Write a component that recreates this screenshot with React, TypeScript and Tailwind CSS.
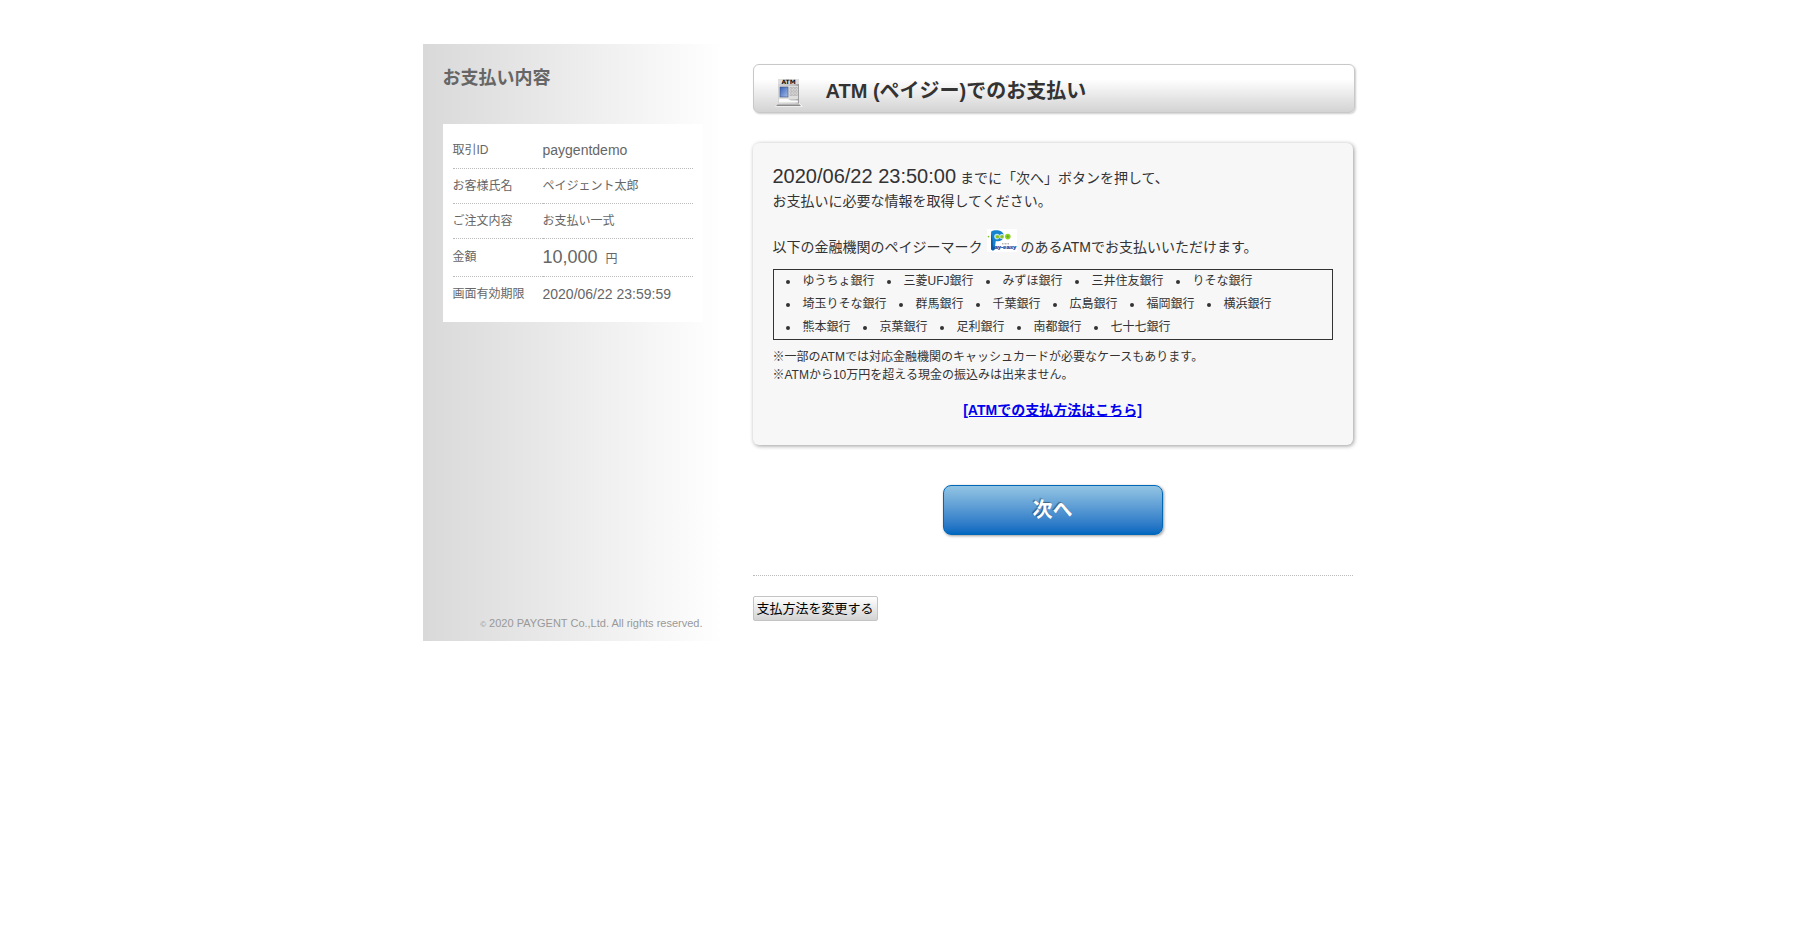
const banks = [
  "ゆうちょ銀行",
  "三菱UFJ銀行",
  "みずほ銀行",
  "三井住友銀行",
  "りそな銀行",
  "埼玉りそな銀行",
  "群馬銀行",
  "千葉銀行",
  "広島銀行",
  "福岡銀行",
  "横浜銀行",
  "熊本銀行",
  "京葉銀行",
  "足利銀行",
  "南都銀行",
  "七十七銀行",
];

const orderRows = [
  { label: "取引ID", value: "paygentdemo" },
  { label: "お客様氏名", value: "ペイジェント太郎" },
  { label: "ご注文内容", value: "お支払い一式" },
  { label: "金額", value: "10,000", unit: "円" },
  { label: "画面有効期限", value: "2020/06/22 23:59:59" },
];

function AtmIcon() {
  return (
    <svg className="mt-2" width="28" height="30" viewBox="0 0 28 30" aria-hidden="true">
      <defs>
        <linearGradient id="atm-body" x1="0" y1="0" x2="1" y2="0">
          <stop offset="0" stopColor="#d4d4d4" />
          <stop offset="0.8" stopColor="#c2c2c2" />
          <stop offset="1" stopColor="#9a9a9a" />
        </linearGradient>
        <linearGradient id="atm-screen" x1="0" y1="0" x2="1" y2="1">
          <stop offset="0" stopColor="#3561b8" />
          <stop offset="1" stopColor="#a3bbe8" />
        </linearGradient>
        <linearGradient id="atm-base" x1="0" y1="0" x2="0" y2="1">
          <stop offset="0" stopColor="#dcdcdc" />
          <stop offset="1" stopColor="#777" />
        </linearGradient>
      </defs>
      <path d="M0 28.5 L4 25 H24 L28 28.5 Z" fill="#fff" />
      <rect x="3" y="1" width="21" height="25" fill="url(#atm-body)" />
      <rect x="3" y="1" width="21" height="5" fill="#dedede" />
      <text x="13.5" y="5.5" fontSize="6" fontWeight="700" textAnchor="middle" fill="#111" fontFamily="DejaVu Sans">
        ATM
      </text>
      <rect x="4" y="8" width="19" height="13" fill="#dedede" />
      <rect x="5" y="9" width="8" height="10" fill="url(#atm-screen)" stroke="#3d4f7a" strokeWidth="0.6" />
      <g fill="#fff" stroke="#8d8d8d" strokeWidth="0.5">
        <path d="M15 9.5h1.6v1.6h-1.6zM17.8 9.5h1.6v1.6h-1.6zM20.6 9.5h1.6v1.6h-1.6z" />
        <path d="M15 12.7h1.6v1.6h-1.6zM17.8 12.7h1.6v1.6h-1.6zM20.6 12.7h1.6v1.6h-1.6z" />
        <path d="M15 15.9h1.6v1.6h-1.6zM17.8 15.9h1.6v1.6h-1.6zM20.6 15.9h1.6v1.6h-1.6z" />
      </g>
      <path d="M4 21 H13 L16 22.5 H23 V24.5 H4 Z" fill="#fafafa" />
      <path d="M3 25.5 H24 L26 28 H1 Z" fill="url(#atm-base)" />
    </svg>
  );
}

function PayEasyMark() {
  return (
    <svg className="mx-1 inline-block align-baseline" width="30" height="23" viewBox="0 0 30 23" role="img" aria-label="Pay-easy">
      <rect width="30" height="23" fill="#fff" />
      <path
        d="M4.2 2.6 C6 1 9.5 0.9 12 1.5 C15.8 2.4 17.2 5 16.5 8 C15.7 11.6 12.4 12.8 8.8 12 L7.6 20.6 C6.4 22.2 3.9 21.2 4 19.2 Z"
        fill="#1683cf"
      />
      <path d="M4.2 2.6 L4 19.2 C3.9 21.2 6.4 22.2 7.6 20.6 L8 18 C6 18.4 5.6 16 5.8 13 Z" fill="#0a5aa8" />
      <circle cx="10" cy="7.6" r="2.8" fill="#bfe3f7" />
      <circle cx="14.9" cy="7.6" r="2.5" fill="#d6eef9" />
      <circle cx="10.4" cy="7.8" r="1.8" fill="#8fc31f" />
      <circle cx="15" cy="7.8" r="1.8" fill="#8fc31f" />
      <circle cx="20.8" cy="7.6" r="2.8" fill="#8fd31f" />
      <path d="M20.8 6 V9.2 M19.2 7.6 H22.4" stroke="#5cae1c" strokeWidth="0.8" />
      <circle cx="1.5" cy="7.6" r="0.9" fill="#7cc52a" />
      <path d="M15 14.8 H22" stroke="#777" strokeWidth="0.8" strokeDasharray="1 0.5" />
      <text x="7.4" y="20.4" fontSize="6" fontWeight="700" fill="#173f9b" stroke="#173f9b" strokeWidth="0.2" fontFamily="Liberation Sans">
        ay-easy
      </text>
    </svg>
  );
}

function Sidebar() {
  return (
    <aside className="flex min-h-[597px] w-[300px] shrink-0 flex-col bg-linear-to-r from-[#d9d9d9] to-white pl-5 text-[#666]">
      <h2 className="mt-[21px] text-lg leading-[26px] font-bold">お支払い内容</h2>
      <div className="mt-[33px] w-[260px] bg-white px-[10px] pt-[9px] pb-[11px]">
        <table className="w-full border-collapse text-left text-xs">
          <tbody>
            {orderRows.map((row) => (
              <tr
                key={row.label}
                className={`${row.unit ? "h-[38px]" : "h-[35px]"} border-b border-dotted border-[#bbb] last:border-b-0`}
              >
                <th scope="row" className="w-[90px] p-0 font-normal whitespace-nowrap">
                  {row.label}
                </th>
                <td className="p-0">
                  {row.unit ? (
                    <>
                      <span className="mr-2 text-lg leading-6">{row.value}</span>
                      {row.unit}
                    </>
                  ) : /^[\x20-\x7e]+$/.test(row.value) ? (
                    <span className="text-sm">{row.value}</span>
                  ) : (
                    row.value
                  )}
                </td>
              </tr>
            ))}
          </tbody>
        </table>
      </div>
      <p className="mt-auto mr-5 mb-2 text-right text-[11px] leading-4 text-[#999]">
        <small className="text-[8px]">©</small> 2020 PAYGENT Co.,Ltd. All rights reserved.
      </p>
    </aside>
  );
}

export default function App() {
  return (
    <div
      lang="ja"
      className="mx-auto flex max-w-[960px] items-start gap-[30px] pt-11 font-['Liberation_Sans','Noto_Sans_CJK_JP',sans-serif] text-sm text-[#333]"
    >
      <Sidebar />
      <main className="mr-[30px] min-w-0 flex-1 pt-5">
        <h1 className="-mr-0.5 flex h-[49px] items-center rounded-md border border-[#c8c8c8] bg-linear-to-b from-white from-30% to-[#d3d3d3] pl-[21px] text-xl font-bold shadow-[1px_1px_2px_rgba(0,0,0,0.2)]">
          <AtmIcon />
          <span className="ml-[23px] pt-1">ATM (ペイジー)でのお支払い</span>
        </h1>

        <section className="mt-[30px] rounded-md bg-[#f7f7f7] px-5 pt-[22px] pb-[23px] shadow-[1px_1px_4px_rgba(0,0,0,0.4)]">
          <p className="leading-[23px]">
            <span className="text-xl leading-[23px]">2020/06/22 23:50:00</span> までに「次へ」ボタンを押して、
            <br />
            お支払いに必要な情報を取得してください。
          </p>
          <p className="mt-4 leading-6">
            以下の金融機関のペイジーマーク
            <PayEasyMark />
            のあるATMでお支払いいただけます。
          </p>
          <ul className="mt-[10px] flex flex-wrap border border-[#333] text-xs leading-[23px]">
            {banks.map((bank) => (
              <li key={bank} className="flex items-center">
                <span className="mr-[13px] ml-3 size-1 rounded-full bg-[#333]" />
                {bank}
              </li>
            ))}
          </ul>
          <p className="mt-2 text-xs leading-[18px]">
            ※一部のATMでは対応金融機関のキャッシュカードが必要なケースもあります。
            <br />
            ※ATMから10万円を超える現金の振込みは出来ません。
          </p>
          <p className="mt-[14px] text-center leading-6 font-bold">
            <a href="#atm" className="text-[#0000ee] underline">
              [ATMでの支払方法はこちら]
            </a>
          </p>
        </section>

        <div className="mt-10 flex justify-center border-b border-dotted border-[#bbb] pb-10">
          <button
            type="button"
            className="h-[50px] w-[220px] rounded-lg border border-[#0068b7] bg-linear-to-b from-[#93c5e3] to-[#0068c0] text-xl font-bold text-white shadow-[1px_1px_3px_rgba(0,0,0,0.4)] text-shadow-[-1px_-1px_1px_rgba(0,0,0,0.4)]"
          >
            次へ
          </button>
        </div>

        <button
          type="button"
          className="mt-5 h-[25px] rounded-xs border border-[#c4c4c4] bg-linear-to-b from-white to-[#d3d3d3] px-[3px] text-[13px] leading-[23px] text-black"
        >
          支払方法を変更する
        </button>
      </main>
    </div>
  );
}
